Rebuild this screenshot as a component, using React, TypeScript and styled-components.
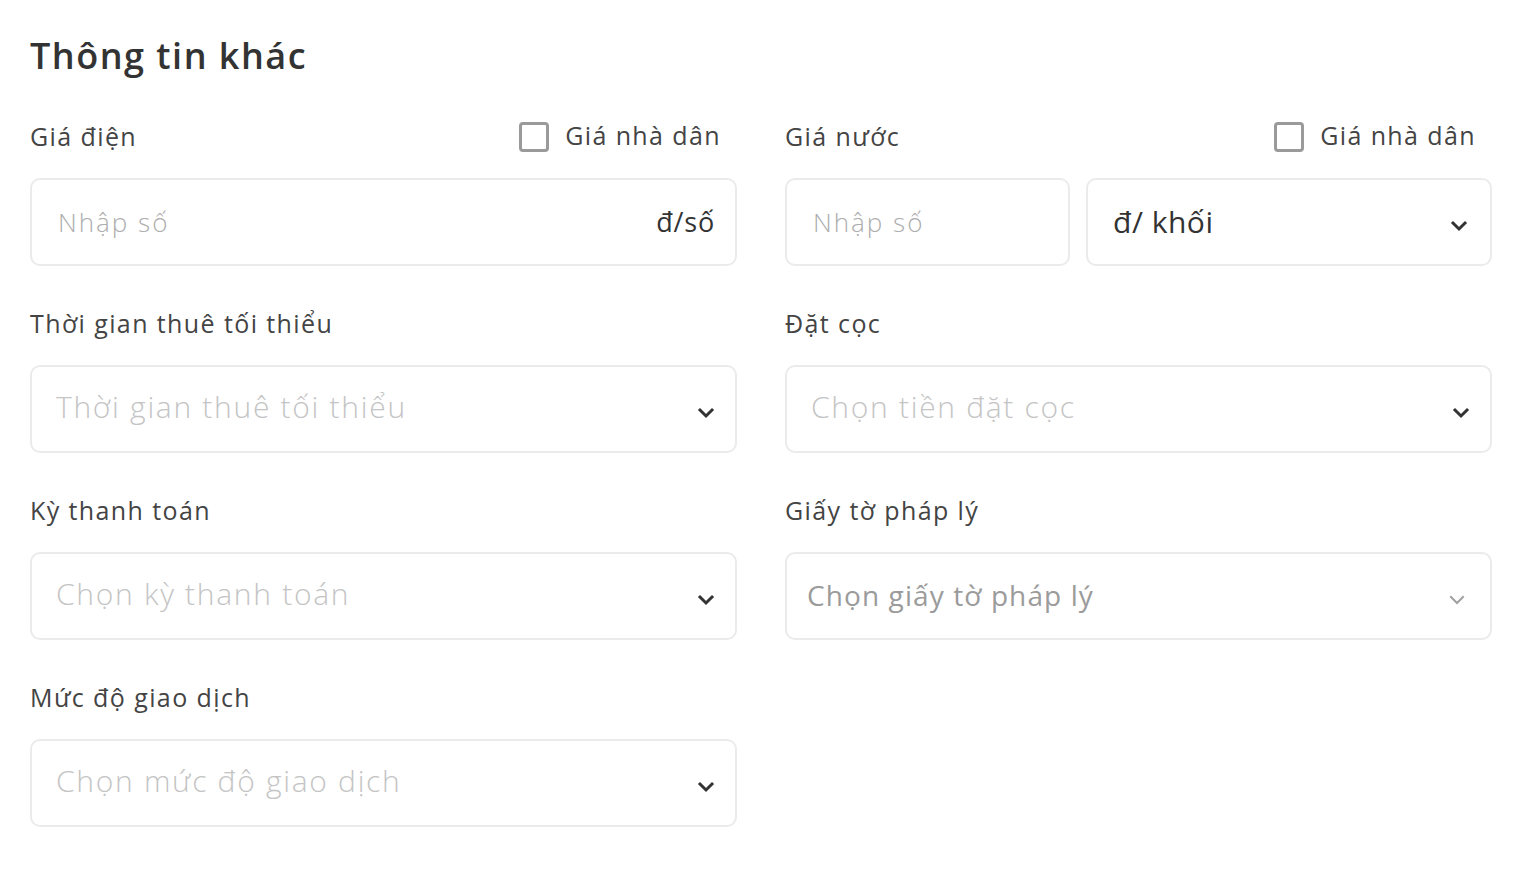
import React from 'react';
import styled, { createGlobalStyle, css } from 'styled-components';

const GlobalStyle = createGlobalStyle`
  html, body {
    margin: 0;
    padding: 0;
    background: #ffffff;
  }
  body {
    font-family: "Open Sans", "Noto Sans", sans-serif;
    color: #333333;
  }
  * { box-sizing: border-box; }
`;

const Page = styled.div`
  width: 1522px;
  padding: 33px 30px 0 30px;
`;

const Title = styled.h2`
  margin: 0 0 41px 0;
  height: 46px;
  line-height: 46px;
  font-size: 36px;
  font-weight: 600;
  color: #333333;
  letter-spacing: 1.5px;
`;

const Grid = styled.div`
  display: grid;
  grid-template-columns: 707px 707px;
  column-gap: 48px;
  row-gap: 41px;
`;

const Field = styled.div`
  display: flex;
  flex-direction: column;
  gap: 26px;
`;

const Header = styled.div`
  display: flex;
  align-items: center;
  justify-content: space-between;
  height: 32px;
`;

const Label = styled.span`
  font-size: 25px;
  color: #444444;
  letter-spacing: 1.4px;
  padding-bottom: 1px;
`;

const CheckLabel = styled.label`
  display: flex;
  align-items: center;
  gap: 16px;
  font-size: 25px;
  color: #444444;
  letter-spacing: 1.4px;
  margin-right: 16px;
`;

const Box = styled.span`
  width: 30px;
  height: 30px;
  border: 3px solid #9a9a9a;
  border-radius: 4px;
  background: #fff;
  margin-top: 2px;
`;

const TextTrack = styled.span`
  padding-bottom: 3px;
`;

const Row = styled.div`
  display: flex;
  gap: 16px;
`;

const Control = styled.div<{ $width?: number; $muted?: boolean }>`
  display: flex;
  align-items: center;
  justify-content: space-between;
  height: 88px;
  width: ${p => (p.$width ? `${p.$width}px` : '100%')};
  border: 2px solid #ebebeb;
  border-radius: 10px;
  padding: 0 20px 0 24px;
  background: #fff;
  ${p =>
    p.$muted &&
    css`
      padding-left: 20px;
      padding-right: 24px;
    `}
`;

const Placeholder = styled.span<{ $size?: number; $tone?: string; $track?: number }>`
  font-size: ${p => p.$size ?? 30}px;
  font-weight: 300;
  color: ${p => p.$tone ?? '#c4c4c4'};
  letter-spacing: ${p => p.$track ?? 1.7}px;
  padding-bottom: 6px;
`;

const Value = styled.span<{ $size?: number; $track?: number }>`
  font-size: ${p => p.$size ?? 30}px;
  color: #333333;
  letter-spacing: ${p => p.$track ?? 0.8}px;
  padding-bottom: 2px;
`;

const Chevron = ({ color = '#333', width = 3 }: { color?: string; width?: number }) => (
  <svg width="18" height="12" viewBox="0 0 18 12" style={{ marginTop: 8 }}>
    <path d="M3 3 L9 9 L15 3" fill="none" stroke={color} strokeWidth={width} strokeLinecap="square" />
  </svg>
);

const SelectBox = ({ text, muted }: { text: string; muted?: boolean }) => (
  <Control $muted={muted}>
    {muted ? (
      <Placeholder $size={28} $tone="#9b9b9b" $track={1.1} style={{ fontWeight: 400, paddingBottom: 2 }}>
        {text}
      </Placeholder>
    ) : (
      <Placeholder>{text}</Placeholder>
    )}
    {muted ? <Chevron color="#a0a0a0" width={2} /> : <Chevron />}
  </Control>
);

export default function App() {
  return (
    <>
      <GlobalStyle />
      <Page>
        <Title>Thông tin khác</Title>
        <Grid>
          <Field>
            <Header>
              <Label>Giá điện</Label>
              <CheckLabel>
                <Box />
                <TextTrack>Giá nhà dân</TextTrack>
              </CheckLabel>
            </Header>
            <Control style={{ paddingLeft: 26, paddingRight: 20 }}>
              <Placeholder $size={26} $tone="#adadad" $track={2} style={{ paddingBottom: 0 }}>
                Nhập số
              </Placeholder>
              <Value $size={27}>đ/số</Value>
            </Control>
          </Field>

          <Field>
            <Header>
              <Label>Giá nước</Label>
              <CheckLabel>
                <Box />
                <TextTrack>Giá nhà dân</TextTrack>
              </CheckLabel>
            </Header>
            <Row>
              <Control $width={285} style={{ paddingLeft: 26 }}>
                <Placeholder $size={26} $tone="#adadad" $track={2} style={{ paddingBottom: 0 }}>
                  Nhập số
                </Placeholder>
              </Control>
              <Control $width={406} style={{ paddingLeft: 25, paddingRight: 22 }}>
                <Value $track={0.5}>đ/ khối</Value>
                <Chevron />
              </Control>
            </Row>
          </Field>

          <Field>
            <Header>
              <Label>Thời gian thuê tối thiểu</Label>
            </Header>
            <SelectBox text="Thời gian thuê tối thiểu" />
          </Field>

          <Field>
            <Header>
              <Label>Đặt cọc</Label>
            </Header>
            <SelectBox text="Chọn tiền đặt cọc" />
          </Field>

          <Field>
            <Header>
              <Label>Kỳ thanh toán</Label>
            </Header>
            <SelectBox text="Chọn kỳ thanh toán" />
          </Field>

          <Field>
            <Header>
              <Label>Giấy tờ pháp lý</Label>
            </Header>
            <SelectBox text="Chọn giấy tờ pháp lý" muted />
          </Field>

          <Field>
            <Header>
              <Label>Mức độ giao dịch</Label>
            </Header>
            <SelectBox text="Chọn mức độ giao dịch" />
          </Field>
        </Grid>
      </Page>
    </>
  );
}
